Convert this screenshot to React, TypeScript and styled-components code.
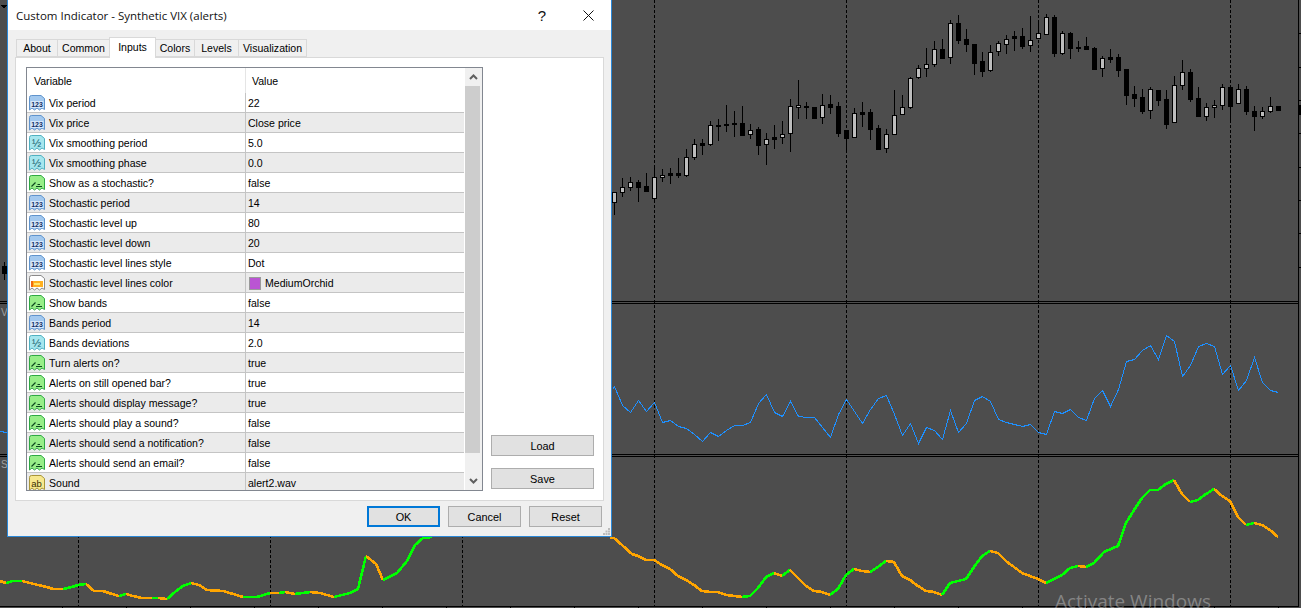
import React from 'react';
import styled, {createGlobalStyle} from 'styled-components';

type Kind = 'int' | 'dbl' | 'bool' | 'color' | 'str';
type Pt = [number, number];
type Part = {color: string; pts: Pt[]};

const ROWS: {kind: Kind; name: string; value: string; swatch?: string}[] = [
  {kind: 'int', name: 'Vix period', value: '22'},
  {kind: 'int', name: 'Vix price', value: 'Close price'},
  {kind: 'dbl', name: 'Vix smoothing period', value: '5.0'},
  {kind: 'dbl', name: 'Vix smoothing phase', value: '0.0'},
  {kind: 'bool', name: 'Show as a stochastic?', value: 'false'},
  {kind: 'int', name: 'Stochastic period', value: '14'},
  {kind: 'int', name: 'Stochastic level up', value: '80'},
  {kind: 'int', name: 'Stochastic level down', value: '20'},
  {kind: 'int', name: 'Stochastic level lines style', value: 'Dot'},
  {kind: 'color', name: 'Stochastic level lines color', value: 'MediumOrchid', swatch: '#ba55d3'},
  {kind: 'bool', name: 'Show bands', value: 'false'},
  {kind: 'int', name: 'Bands period', value: '14'},
  {kind: 'dbl', name: 'Bands deviations', value: '2.0'},
  {kind: 'bool', name: 'Turn alerts on?', value: 'true'},
  {kind: 'bool', name: 'Alerts on still opened bar?', value: 'true'},
  {kind: 'bool', name: 'Alerts should display message?', value: 'true'},
  {kind: 'bool', name: 'Alerts should play a sound?', value: 'false'},
  {kind: 'bool', name: 'Alerts should send a notification?', value: 'false'},
  {kind: 'bool', name: 'Alerts should send an email?', value: 'false'},
  {kind: 'str', name: 'Sound', value: 'alert2.wav'},
];

const TABS: {label: string; width: number}[] = [
  {label: 'About', width: 42},
  {label: 'Common', width: 53},
  {label: 'Inputs', width: 47},
  {label: 'Colors', width: 40},
  {label: 'Levels', width: 45},
  {label: 'Visualization', width: 69},
];

// candles: [wickTop, wickBottom, bodyTop, bodyBottom, up], y values at 3x scale
const CANDLES: [number, number, number, number, number][] = [
  [575, 645, 577, 607, 1], [535, 590, 560, 577, 1], [532, 572, 547, 560, 1], [540, 605, 547, 560, 0],
  [520, 575, 559, 572, 0], [500, 600, 532, 593, 1], [507, 545, 524, 532, 1], [505, 552, 520, 524, 0],
  [475, 533, 520, 524, 0], [448, 530, 470, 524, 1], [418, 480, 433, 470, 1], [418, 465, 430, 434, 0],
  [364, 437, 376, 431, 1], [358, 422, 376, 378, 0], [316, 396, 371, 376, 1], [334, 410, 370, 371, 0],
  [319, 408, 370, 404, 0], [373, 416, 389, 403, 1], [380, 465, 388, 434, 0], [400, 495, 416, 433, 1],
  [376, 446, 412, 416, 0], [364, 432, 401, 412, 1], [297, 456, 319, 400, 1], [240, 356, 316, 322, 1],
  [307, 356, 319, 320, 0], [320, 356, 322, 353, 0], [282, 372, 314, 352, 1], [286, 342, 313, 320, 0],
  [307, 410, 319, 398, 0], [390, 452, 391, 413, 0], [325, 412, 340, 412, 1], [307, 380, 337, 341, 0],
  [328, 420, 337, 386, 0], [374, 448, 385, 446, 0], [388, 458, 401, 445, 1], [270, 403, 344, 401, 1],
  [285, 346, 320, 343, 1], [232, 326, 233, 320, 1], [196, 236, 203, 232, 1], [145, 232, 191, 203, 1],
  [124, 200, 148, 191, 1], [118, 176, 148, 173, 0], [60, 192, 70, 172, 1], [45, 132, 70, 119, 0],
  [88, 155, 118, 133, 0], [132, 224, 133, 188, 0], [156, 230, 184, 212, 0], [136, 215, 157, 209, 1],
  [124, 167, 130, 154, 1], [106, 162, 116, 131, 1], [94, 152, 109, 113, 0], [85, 146, 109, 137, 0],
  [48, 155, 119, 136, 1], [66, 113, 100, 113, 1], [43, 106, 52, 101, 1], [46, 170, 52, 158, 0],
  [94, 164, 100, 158, 1], [95, 176, 99, 143, 0], [124, 155, 141, 144, 0], [112, 150, 139, 147, 0],
  [142, 206, 145, 206, 0], [168, 230, 175, 205, 1], [148, 188, 172, 176, 0], [163, 230, 172, 209, 0],
  [208, 314, 208, 284, 0], [259, 320, 283, 293, 0], [267, 342, 292, 332, 0], [262, 356, 268, 331, 1],
  [270, 317, 271, 299, 0], [270, 386, 298, 371, 0], [228, 368, 256, 367, 1], [181, 270, 217, 254, 1],
  [208, 305, 217, 296, 0], [262, 352, 295, 347, 0], [309, 362, 322, 347, 1], [300, 354, 316, 322, 1],
  [253, 330, 262, 316, 1], [262, 362, 262, 317, 0], [253, 312, 268, 310, 1], [259, 345, 268, 334, 0],
  [319, 392, 334, 347, 0], [322, 356, 334, 347, 1], [292, 338, 319, 334, 1], [319, 329, 319, 329, 0],
];

const BLUE: Pt[] = [
  [612, 389], [614, 386], [622, 405], [630, 412], [638, 400], [646, 411], [654, 402], [662, 422], [670, 420],
  [678, 426], [686, 428], [694, 434], [702, 441], [710, 432], [718, 436], [726, 430], [734, 425], [742, 425],
  [750, 422], [758, 403], [766, 394], [774, 412], [782, 416], [790, 401], [798, 416], [806, 417], [814, 417],
  [822, 427], [830, 437], [838, 414], [846, 399], [854, 411], [862, 423], [870, 409], [878, 398], [886, 395],
  [894, 414], [902, 435], [910, 423], [918, 443], [926, 427], [934, 430], [942, 439], [950, 410], [958, 432],
  [966, 423], [974, 400], [982, 396], [990, 401], [998, 419], [1006, 422], [1014, 424], [1022, 426], [1030, 424],
  [1038, 432], [1046, 434], [1054, 411], [1062, 413], [1070, 409], [1078, 417], [1086, 420], [1094, 398],
  [1102, 390], [1110, 406], [1118, 389], [1126, 361], [1134, 359], [1142, 350], [1150, 345], [1158, 359],
  [1166, 335], [1174, 341], [1182, 376], [1190, 365], [1198, 346], [1206, 343], [1214, 346], [1222, 374],
  [1230, 365], [1238, 390], [1246, 380], [1254, 357], [1262, 382], [1270, 390], [1278, 392],
];

const ORANGE = '#ffa500';
const GREEN = '#00ff00';

const seg = (up: boolean, pts: Pt[]): Part => ({color: up ? GREEN : ORANGE, pts});

const STOCH: Part[] = [
  seg(false, [[0, 581], [6, 583]]),
  seg(true, [[6, 583], [13, 581], [22, 581]]),
  seg(false, [[22, 581], [30, 583], [38, 585], [47, 587], [53, 589], [63, 589]]),
  seg(true, [[63, 589], [72, 587], [78, 585], [86, 584]]),
  seg(false, [[86, 584], [94, 591], [103, 591], [112, 594], [119, 596]]),
  seg(true, [[119, 596], [126, 594]]),
  seg(false, [[126, 594], [133, 596], [142, 598], [152, 598]]),
  seg(true, [[152, 598], [158, 598]]),
  seg(false, [[158, 598], [167, 599]]),
  seg(true, [[167, 599], [175, 592], [183, 586], [191, 583]]),
  seg(false, [[191, 583], [199, 585], [207, 590], [223, 591], [233, 594], [243, 597]]),
  seg(true, [[243, 597], [257, 597], [270, 593]]),
  seg(false, [[270, 593], [279, 593]]),
  seg(true, [[279, 593], [285, 592]]),
  seg(false, [[285, 592], [295, 594]]),
  seg(true, [[295, 594], [310, 592]]),
  seg(false, [[310, 592], [320, 593], [334, 597]]),
  seg(true, [[334, 597], [350, 593], [358, 589], [366, 556]]),
  seg(false, [[366, 556], [376, 564], [383, 580]]),
  seg(true, [[383, 580], [397, 573], [407, 561], [415, 545], [423, 538], [432, 537]]),
  seg(false, [[610, 538], [614, 538], [622, 545], [632, 554], [638, 556], [646, 560], [654, 560], [662, 565], [670, 569], [678, 576], [686, 580], [694, 585], [702, 591], [710, 592], [718, 592], [726, 595], [734, 596], [742, 597]]),
  seg(true, [[742, 597], [750, 596], [758, 588], [766, 577], [774, 573]]),
  seg(false, [[774, 573], [782, 576]]),
  seg(true, [[782, 576], [790, 570]]),
  seg(false, [[790, 570], [798, 578], [806, 586], [814, 591], [822, 592], [830, 595]]),
  seg(true, [[830, 595], [838, 589], [846, 575], [854, 569]]),
  seg(false, [[854, 569], [862, 571], [870, 572]]),
  seg(true, [[870, 572], [878, 567], [886, 561]]),
  seg(false, [[886, 561], [894, 562], [902, 576], [910, 580], [918, 586], [926, 591], [934, 592], [942, 595]]),
  seg(true, [[942, 595], [950, 583], [958, 581], [966, 579], [974, 567], [982, 556], [990, 551]]),
  seg(false, [[990, 551], [998, 553], [1006, 561], [1014, 567], [1022, 573], [1030, 576], [1038, 579], [1046, 583]]),
  seg(true, [[1046, 583], [1054, 579], [1062, 575], [1070, 568], [1078, 566]]),
  seg(false, [[1078, 566], [1086, 567]]),
  seg(true, [[1086, 567], [1094, 563], [1104, 552], [1118, 546], [1126, 523], [1134, 510], [1142, 498], [1150, 490], [1158, 490], [1166, 484], [1174, 480]]),
  seg(false, [[1174, 480], [1182, 494], [1190, 502]]),
  seg(true, [[1190, 502], [1198, 500], [1206, 494], [1214, 489]]),
  seg(false, [[1214, 489], [1222, 496], [1230, 501], [1238, 517], [1246, 525]]),
  seg(true, [[1246, 525], [1254, 523]]),
  seg(false, [[1254, 523], [1262, 525], [1270, 530], [1278, 537]]),
];

const path = (pts: Pt[]) => pts.map(([x, y]) => `${x},${y}`).join(' ');

const GlobalStyle = createGlobalStyle`
  html, body {
    margin: 0;
    padding: 0;
    background: #4d4d4d;
  }
`;

const Screen = styled.div`
  position: relative;
  width: 1301px;
  height: 608px;
  overflow: hidden;
  background: #4d4d4d;
`;

const ChartSvg = styled.svg`
  display: block;
`;

const Watermark = styled.div`
  position: absolute;
  left: 1055px;
  top: 588px;
  font: 19px/26px 'Open Sans', sans-serif;
  color: rgba(255, 255, 255, 0.32);
  white-space: nowrap;
`;

const Window = styled.div`
  position: absolute;
  left: 7px;
  top: 0;
  box-sizing: border-box;
  width: 605px;
  height: 537px;
  display: flex;
  flex-direction: column;
  background: #f0f0f0;
  border: 1px solid #2b88d8;
  border-top: none;
  font: 10.55px 'Liberation Sans', Arial, sans-serif;
  color: #000;
`;

const TitleBar = styled.div`
  height: 30px;
  flex: none;
  display: flex;
  align-items: center;
  padding-left: 8px;
  background: #fff;
  font: 11.5px 'Open Sans', sans-serif;
  color: #111;
`;

const TitleText = styled.span`
  flex: 1;
`;

const HelpButton = styled.span`
  width: 46px;
  text-align: center;
  font: 15px 'Liberation Sans', sans-serif;
`;

const CloseButton = styled.span`
  width: 46px;
  display: flex;
  justify-content: center;
`;

const TabStrip = styled.div`
  height: 20px;
  flex: none;
  margin-top: 7px;
  padding-left: 8px;
  display: flex;
  align-items: flex-end;
`;

const Tab = styled.div<{$active?: boolean; $width: number}>`
  box-sizing: border-box;
  width: ${({$width}) => $width}px;
  height: ${({$active}) => ($active ? 21 : 18)}px;
  margin-bottom: ${({$active}) => ($active ? -1 : 0)}px;
  margin-right: -1px;
  padding-top: ${({$active}) => ($active ? 3 : 2)}px;
  text-align: center;
  position: relative;
  z-index: ${({$active}) => ($active ? 1 : 0)};
  background: ${({$active}) => ($active ? '#fff' : '#f0f0f0')};
  border: 1px solid #d9d9d9;
  border-bottom: ${({$active}) => ($active ? 'none' : '1px solid #d9d9d9')};
`;

const TabPage = styled.div`
  box-sizing: border-box;
  height: 444px;
  flex: none;
  margin: 0 7px;
  padding: 9px 9px 9px 10px;
  display: flex;
  gap: 8px;
  background: #fff;
  border: 1px solid #d9d9d9;
`;

const ListBox = styled.div`
  box-sizing: border-box;
  width: 457px;
  height: 424px;
  flex: none;
  display: flex;
  border: 1px solid #828790;
`;

const ListBody = styled.div`
  width: 437px;
  margin-right: 1px;
  overflow: hidden;
`;

const HeaderRow = styled.div`
  height: 25px;
  display: grid;
  grid-template-columns: 218px 1fr;
  align-items: center;
`;

const HeaderCell = styled.div<{$value?: boolean}>`
  height: 100%;
  line-height: 26px;
  padding-left: ${({$value}) => ($value ? 6 : 7)}px;
  border-left: ${({$value}) => ($value ? '1px solid #e5e5e5' : 'none')};
`;

const Row = styled.div<{$alt: boolean}>`
  box-sizing: border-box;
  height: 20px;
  display: grid;
  grid-template-columns: 218px 1fr;
  align-items: stretch;
  background: ${({$alt}) => ($alt ? '#ebebeb' : '#fff')};
  border-bottom: 1px solid #c4c4c4;
`;

const NameCell = styled.div`
  display: flex;
  align-items: center;
  gap: 4px;
  padding: 1px 0 0 2px;
  white-space: nowrap;
`;

const ValueCell = styled.div`
  display: flex;
  align-items: center;
  gap: 4px;
  padding: 1px 0 0 2px;
  border-left: 1px solid #c4c4c4;
`;

const Swatch = styled.span<{$color: string}>`
  box-sizing: border-box;
  width: 12px;
  height: 13px;
  margin-left: 1px;
  background: ${({$color}) => $color};
  border: 1px solid #9a9a9a;
`;

const ScrollBar = styled.div`
  width: 17px;
  flex: none;
  display: flex;
  flex-direction: column;
  background: #f0f0f0;
`;

const ScrollArrow = styled.div<{$height: number}>`
  height: ${({$height}) => $height}px;
  flex: none;
  display: flex;
  align-items: center;
  justify-content: center;
`;

const ScrollThumb = styled.div`
  height: 367px;
  flex: none;
  margin-right: 2px;
  background: #cdcdcd;
`;

const ScrollRest = styled.div`
  flex: 1;
`;

const SideColumn = styled.div`
  flex: 1;
  display: flex;
  flex-direction: column;
  justify-content: flex-end;
  gap: 12px;
  padding-bottom: 2px;
`;

const Button = styled.button<{$primary?: boolean; $wide?: boolean}>`
  box-sizing: border-box;
  width: ${({$wide}) => ($wide ? 103 : 73)}px;
  height: 21px;
  padding: 0;
  background: #e1e1e1;
  border: ${({$primary}) => ($primary ? '2px solid #0078d7' : '1px solid #adadad')};
  border-radius: 0;
  font: 10.9px 'Liberation Sans', Arial, sans-serif;
  color: #000;
`;

const Footer = styled.div`
  flex: 1;
  display: flex;
  justify-content: flex-end;
  gap: 8px;
  padding: 5px 9px 0 0;
`;

const Grip = styled.svg`
  position: absolute;
  right: 1px;
  bottom: 1px;
`;

const ICON_COLORS: Record<Kind, {fill: string; edge: string}> = {
  int: {fill: '#a3c9ef', edge: '#5f93cc'},
  dbl: {fill: '#a5e6ee', edge: '#50b0c0'},
  bool: {fill: '#97ee88', edge: '#2fa845'},
  color: {fill: '#ffffff', edge: '#8a8a8a'},
  str: {fill: '#f7e88e', edge: '#a8963a'},
};

const TypeIcon = ({kind}: {kind: Kind}) => {
  const {fill, edge} = ICON_COLORS[kind];
  return (
    <svg width="16" height="16" viewBox="0 0 16 16">
      <path
        d="M.5 2.5 Q.5 .5 2.5 .5 H12 L15.5 3.5 V14.5 L13 13 L10.5 15 L8 13 L5.5 15 L3 13 L.5 15 Z"
        fill={fill}
        stroke={edge}
      />
      {kind === 'int' && <rect x="1.5" y="6" width="13" height="7" fill="#d6e8fa" />}
      {kind === 'int' && (
        <text x="8" y="12" textAnchor="middle" fontFamily="Liberation Sans" fontSize="7" fontWeight="700" fill="#0f2f66">
          123
        </text>
      )}
      {kind === 'dbl' && (
        <text x="7.5" y="11.5" textAnchor="middle" fontFamily="Liberation Sans" fontSize="11" fill="#135a6a">
          ½
        </text>
      )}
      {kind === 'bool' && <path d="M2.5 11.5 L6.5 7.5 M8.5 9.5 H11 M7 11.5 H13" fill="none" stroke="#0d4a1e" strokeWidth="1.2" />}
      {kind === 'str' && (
        <text x="7.5" y="11.5" textAnchor="middle" fontFamily="Liberation Sans" fontSize="9.5" fill="#3a3000">
          ab
        </text>
      )}
      {kind === 'color' && (
        <>
          <rect x="2" y="6" width="12" height="6" fill="#ffb020" />
          <rect x="5" y="8" width="6" height="2" fill="#ffe870" />
          <rect x="2" y="6" width="2" height="6" fill="#f06a10" />
        </>
      )}
    </svg>
  );
};

const Chart = () => (
  <ChartSvg width="1301" height="608" viewBox="0 0 1301 608" shapeRendering="crispEdges">
    {[78, 270, 462, 654, 846, 1038, 1230].map((x) => (
      <line key={x} x1={x + 0.5} y1="0" x2={x + 0.5} y2="606" stroke="#000" strokeDasharray="3 2" />
    ))}
    {[301, 303, 454, 456].map((y) => (
      <line key={y} x1="0" y1={y + 0.5} x2="1298" y2={y + 0.5} stroke="#000" />
    ))}
    <line x1="0" y1="606.5" x2="1299" y2="606.5" stroke="#000" />
    <line x1="1298.5" y1="0" x2="1298.5" y2="607" stroke="#000" />
    {Array.from({length: 20}, (_, k) => 62 + 64 * k).map((x) => (
      <line key={x} x1={x + 0.5} y1="606" x2={x + 0.5} y2="608" stroke="#000" />
    ))}
    {[33, 67, 100, 133, 167, 200, 233, 267].map((y) => (
      <line key={y} x1="1298" y1={y + 0.5} x2="1301" y2={y + 0.5} stroke="#000" />
    ))}
    <rect x="1299" y="105" width="2" height="10" fill="#000" />
    {/* scroll marker and bits of the chart left of the dialog */}
    <path d="M1 5 H7 L4 9 Z" fill="#000" />
    <line x1="4.5" y1="262" x2="4.5" y2="280" stroke="#000" />
    <rect x="2" y="266" width="5" height="8" fill="#000" />
    <polyline points="0,431 7,433" fill="none" stroke="#1e90ff" />
    <text x="1" y="316" fontFamily="Liberation Sans" fontSize="10" fill="#a0a0a0">V</text>
    <text x="1" y="468" fontFamily="Liberation Sans" fontSize="10" fill="#a0a0a0">S</text>
    {CANDLES.map(([wt, wb, bt, bb, up], i) => {
      const x = 614 + 8 * i;
      const top = Math.round(bt / 3);
      const h = Math.max(Math.round(bb / 3) - top, 1);
      return (
        <g key={i}>
          <line x1={x + 0.5} y1={Math.round(wt / 3)} x2={x + 0.5} y2={Math.round(wb / 3)} stroke="#000" />
          {up ? (
            <rect x={x - 2 + 0.5} y={top + 0.5} width="4" height={h} fill="#bdbdbd" stroke="#000" />
          ) : (
            <rect x={x - 2} y={top} width="5" height={h + 1} fill="#000" />
          )}
        </g>
      );
    })}
    <polyline points={path(BLUE)} transform="translate(.5 .5)" fill="none" stroke="#1e90ff" />
    {STOCH.map((part, i) => (
      <polyline key={i} points={path(part.pts)} fill="none" stroke={part.color} strokeWidth="2.6" />
    ))}
  </ChartSvg>
);

const App = () => (
  <Screen>
    <GlobalStyle />
    <Chart />
    <Watermark>Activate Windows</Watermark>
    <Window>
      <TitleBar>
        <TitleText>Custom Indicator - Synthetic VIX (alerts)</TitleText>
        <HelpButton>?</HelpButton>
        <CloseButton>
          <svg width="11" height="11" viewBox="0 0 11 11">
            <path d="M.5 .5 L10.5 10.5 M10.5 .5 L.5 10.5" stroke="#111" fill="none" />
          </svg>
        </CloseButton>
      </TitleBar>
      <TabStrip>
        {TABS.map((tab) => (
          <Tab key={tab.label} $width={tab.width} $active={tab.label === 'Inputs'}>
            {tab.label}
          </Tab>
        ))}
      </TabStrip>
      <TabPage>
        <ListBox>
          <ListBody>
            <HeaderRow>
              <HeaderCell>Variable</HeaderCell>
              <HeaderCell $value>Value</HeaderCell>
            </HeaderRow>
            {ROWS.map((row, i) => (
              <Row key={row.name} $alt={i % 2 === 1}>
                <NameCell>
                  <TypeIcon kind={row.kind} />
                  {row.name}
                </NameCell>
                <ValueCell>
                  {row.swatch && <Swatch $color={row.swatch} />}
                  {row.value}
                </ValueCell>
              </Row>
            ))}
          </ListBody>
          <ScrollBar>
            <ScrollArrow $height={18}>
              <svg width="9" height="6" viewBox="0 0 9 6">
                <path d="M1 5 L4.5 1.5 L8 5" fill="none" stroke="#606060" strokeWidth="2" />
              </svg>
            </ScrollArrow>
            <ScrollThumb />
            <ScrollRest />
            <ScrollArrow $height={18}>
              <svg width="9" height="6" viewBox="0 0 9 6">
                <path d="M1 1 L4.5 4.5 L8 1" fill="none" stroke="#606060" strokeWidth="2" />
              </svg>
            </ScrollArrow>
          </ScrollBar>
        </ListBox>
        <SideColumn>
          <Button $wide>Load</Button>
          <Button $wide>Save</Button>
        </SideColumn>
      </TabPage>
      <Footer>
        <Button $primary>OK</Button>
        <Button>Cancel</Button>
        <Button>Reset</Button>
      </Footer>
      <Grip width="7" height="7" viewBox="0 0 7 7">
        <path d="M5 0h2v2H5zM2.5 2.5h2v2h-2zM5 2.5h2v2H5zM0 5h2v2H0zM2.5 5h2v2h-2zM5 5h2v2H5z" fill="#bcbcbc" />
      </Grip>
    </Window>
  </Screen>
);

export default App;
